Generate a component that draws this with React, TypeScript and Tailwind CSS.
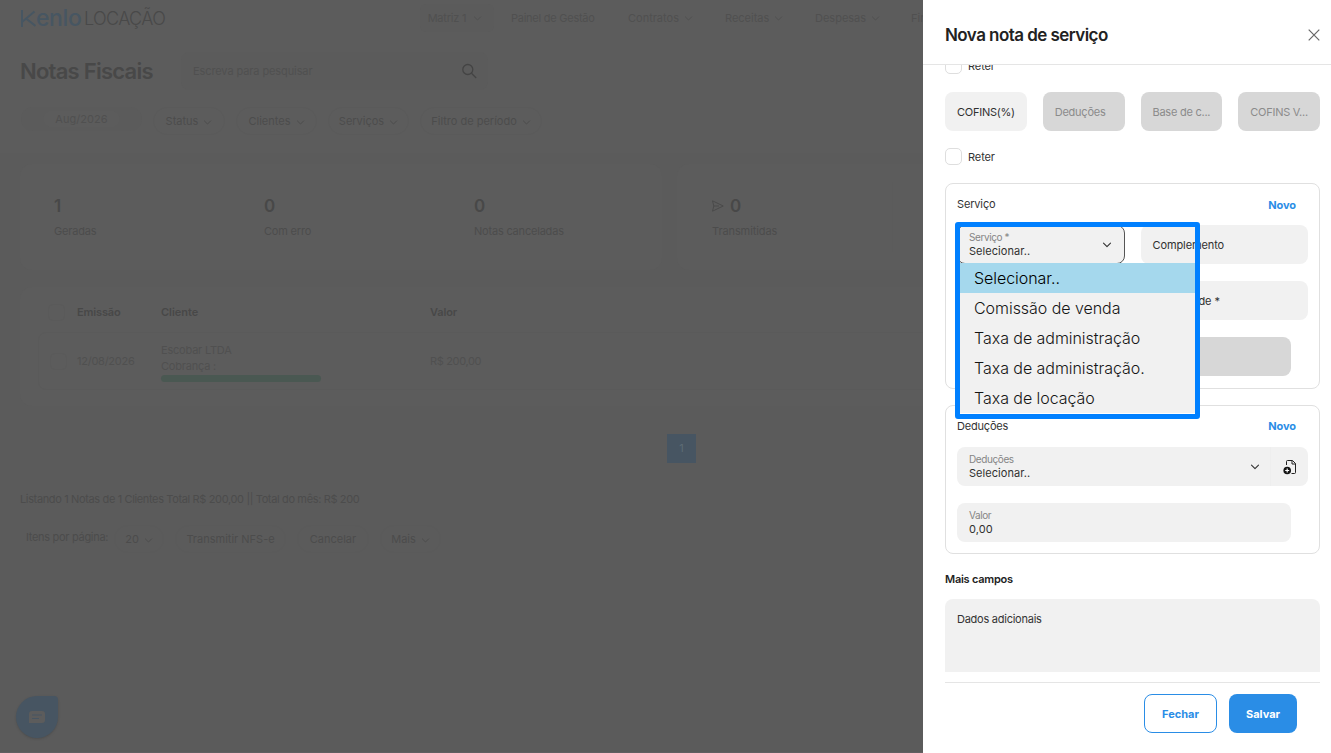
import React from 'react';
import clsx from 'clsx';

const NAV_ITEMS = [
  { label: 'Contratos', width: 'w-[97px]' },
  { label: 'Receitas', width: 'w-[90px]' },
  { label: 'Despesas', width: 'w-[96px]' },
  { label: 'Financeiro', width: 'w-[100px]' },
];

const FILTERS = [
  { label: 'Status', width: 'w-[72px]' },
  { label: 'Clientes', width: 'w-[81px]' },
  { label: 'Serviços', width: 'w-[81px]' },
  { label: 'Filtro de período', width: 'w-[122px]' },
];

const STATS = [
  { value: '1', label: 'Geradas' },
  { value: '0', label: 'Com erro' },
  { value: '0', label: 'Notas canceladas' },
];

const OPTIONS = [
  'Selecionar..',
  'Comissão de venda',
  'Taxa de administração',
  'Taxa de administração.',
  'Taxa de locação',
];

const Chevron = ({ className }: { className?: string }) => (
  <svg viewBox="0 0 10 10" fill="none" stroke="currentColor" strokeWidth={1.1} strokeLinecap="round" strokeLinejoin="round" className={clsx('shrink-0', className)}>
    <path d="M1.5 3.2L5 6.7L8.5 3.2" />
  </svg>
);

const Logo = () => (
  <div className="flex h-[22px] items-center">
    <svg viewBox="0 0 16 17" fill="none" stroke="#475662" strokeWidth={2} className="h-[17px] w-4">
      <path d="M2 0V17M2 12L14.5 1.5M6 8.5L15.5 16" />
    </svg>
    <span className="w-[48px] text-[23px] leading-none font-medium tracking-[-0.4px] text-[#475662]">enlo</span>
    <span className="pt-px text-[18px] leading-none font-light tracking-[-0.65px] text-[#494949]">LOCAÇÃO</span>
  </div>
);

const Pill = ({ label, width, chevron = true }: { label: string; width: string; chevron?: boolean }) => (
  <div className={clsx('flex h-7 shrink-0 items-center justify-center gap-[5px] rounded-full border border-[#5a5a5a] text-[11px] text-[#4c4c4c]', width)}>
    <span className="whitespace-nowrap">{label}</span>
    {chevron && <Chevron className="mt-0.5 h-[9px] w-[9px]" />}
  </div>
);

const Checkbox = ({ label }: { label: string }) => (
  <div className="flex h-[17px] items-center gap-1.5">
    <span className="h-[17px] w-[17px] rounded-[5px] border border-[#dedede] bg-white" />
    <span className="pt-0.5 text-[11px] tracking-[-0.1px] text-[#333]">{label}</span>
  </div>
);

const Field = ({ label, disabled, className }: { label?: string; disabled?: boolean; className?: string }) => (
  <div
    className={clsx(
      'flex h-[39px] items-center overflow-hidden rounded-lg px-3 pt-0.5 text-[11px] whitespace-nowrap',
      disabled ? 'bg-[#d7d7d7] text-[#8b8b8b]' : 'bg-[#f1f1f1] text-[#303030]',
      className || 'tracking-[-0.25px]',
    )}
  >
    {label}
  </div>
);

const ValueField = ({ label, value, className, children }: { label: string; value: string; className?: string; children?: React.ReactNode }) => (
  <div className={clsx('flex h-[39px] items-center bg-[#f1f1f1]', className)}>
    <div className="flex-1">
      <div className="text-[10px] leading-[11px] tracking-[-0.4px] text-[#858585]">{label}</div>
      <div className="pt-0.5 text-[11px] leading-[13px] tracking-[0.05px] text-[#303030]">{value}</div>
    </div>
    {children}
  </div>
);

const AddFileIcon = () => (
  <svg viewBox="0 0 14 16" fill="none" stroke="#222" className="h-4 w-3.5">
    <path d="M3.5 6V2.5Q3.5 1.5 4.5 1.5H9.5L12.5 4.5V13.5Q12.5 14.5 11.5 14.5H8.5M9 1.5V5H12.5" strokeWidth={1} />
    <circle cx="4.2" cy="11.5" r="3.8" fill="#151515" stroke="none" />
    <path d="M4.2 9.5V13.5M2.2 11.5H6.2" stroke="#fff" strokeWidth={1.1} />
  </svg>
);

const NotesPage = () => (
  <main className="relative h-full w-[923px] shrink-0 overflow-hidden border-b border-[#625f62] bg-[#5b5b5b] text-[11px] text-[#4c4c4c]">
    <header className="flex h-9 items-center bg-[#5c5c5c] pl-5">
      <div className="w-[400px] shrink-0">
        <Logo />
      </div>
      <div className="flex h-7 w-[74px] shrink-0 items-center justify-center gap-[7px] rounded-md bg-[#5b5b5b] pr-1 text-[#505050]">
        <span className="tracking-[-0.2px]">Matriz 1</span>
        <Chevron className="h-[9px] w-[9px]" />
      </div>
      <span className="ml-[17px] w-[117px] shrink-0 tracking-[-0.25px] text-[#505050]">Painel de Gestão</span>
      {NAV_ITEMS.map((item) => (
        <div key={item.label} className={clsx('flex shrink-0 items-center gap-[5px] text-[#505050]', item.width)}>
          {item.label}
          <Chevron className="h-[9px] w-[9px]" />
        </div>
      ))}
    </header>

    <div className="flex h-[70px] items-center bg-[#5c5c5c] pl-5">
      <h1 className="w-[161px] shrink-0 text-[22px] font-semibold tracking-[-0.75px] text-[#484848]">Notas Fiscais</h1>
      <div className="flex h-[38px] w-[307px] items-center justify-between rounded-lg bg-[#5b5b5b] pr-[11px] pl-3 text-[#505050]">
        <span className="tracking-[-0.1px]">Escreva para pesquisar</span>
        <svg viewBox="0 0 16 16" fill="none" stroke="#444" strokeWidth={1.3} className="h-4 w-4">
          <circle cx="6.8" cy="6.5" r="5" />
          <path d="M10.5 10.2L15.2 15" />
        </svg>
      </div>
    </div>

    <div className="flex h-[47px] items-start gap-[11px] bg-[#5c5c5c] pt-[1px] pl-[21px]">
      <div className="flex h-6 w-[121px] items-center justify-center rounded-full bg-[#5b5b5b]">
        <span className="rounded-full bg-[#5c5c5c] px-3 tracking-[0.05px] text-[#505050]">Aug/2026</span>
      </div>
      {FILTERS.map((filter) => (
        <Pill key={filter.label} label={filter.label} width={filter.width} />
      ))}
    </div>

    <div className="flex gap-[15px] pt-[11px] pl-5">
      <section className="flex h-[106px] w-[642px] shrink-0 rounded-xl bg-[#5c5c5c] pl-[34px]">
        {STATS.map((stat) => (
          <div key={stat.label} className="w-[210px] shrink-0 pt-[30px]">
            <div className="text-[17px] leading-6 font-semibold text-[#484848]">{stat.value}</div>
            <div className="mt-[5px] text-[11px] leading-4 tracking-[-0.2px] whitespace-nowrap">{stat.label}</div>
          </div>
        ))}
      </section>
      <section className="flex h-[106px] w-[633px] shrink-0 items-center rounded-xl bg-[#5c5c5c] pl-[35px]">
        <div className="h-[70px] w-[181px] border-r border-[#5b5b5b] pt-3">
          <div className="flex items-center gap-1.5 text-[17px] leading-6 font-semibold text-[#484848]">
            <svg viewBox="0 0 12 12" fill="none" stroke="#4a4a4a" className="h-3 w-3">
              <path d="M0.5 0.8L11.2 6L0.5 11.2L1.8 6ZM1.8 6H7" />
            </svg>
            0
          </div>
          <div className="mt-[5px] text-[11px] leading-4 tracking-[-0.1px]">Transmitidas</div>
        </div>
      </section>
    </div>

    <section className="mt-[17px] ml-5 h-[119px] w-[1290px] rounded-xl bg-[#5c5c5c] pt-[7px] pl-[18px]">
      <div className="flex h-[38px] items-center pb-px pl-2.5 font-semibold text-[#484848]">
        <span className="mr-3 h-[17px] w-[17px] rounded-[5px] border border-[#5a5a5a]" />
        <span className="w-[84px] tracking-[-0.15px]">Emissão</span>
        <span className="w-[269px]">Cliente</span>
        <span className="tracking-[-0.15px]">Valor</span>
      </div>
      <div className="flex h-[58px] items-center rounded-lg border border-[#5a5a5a] pl-[11px] text-[#505050]">
        <span className="mr-[10px] h-[17px] w-[17px] rounded-[5px] border border-[#5a5a5a]" />
        <span className="w-[84px] tracking-[-0.25px]">12/08/2026</span>
        <div className="w-[269px] pt-[1px]">
          <div className="leading-4 tracking-[-0.2px]">Escobar LTDA</div>
          <div className="leading-4 tracking-[-0.2px]">Cobrança :</div>
          <div className="mt-px h-[7px] w-40 rounded-full bg-[#4a5852]" />
        </div>
        <span className="tracking-[-0.35px]">R$ 200,00</span>
      </div>
    </section>

    <div className="flex w-[1331px] justify-center pt-7 pl-8">
      <span className="flex h-[29px] w-[29px] items-center justify-center bg-[#475562] text-[11px] text-[#5d6c75]">1</span>
    </div>

    <p className="mt-7 pl-5 leading-4 tracking-[-0.36px]">
      Listando 1 Notas de 1 Clientes Total R$ 200,00 || Total do mês: R$ 200
    </p>

    <div className="mt-[18px] flex items-center pl-[26px]">
      <span className="mb-1 w-[88px] tracking-[-0.3px] whitespace-nowrap">Itens por página:</span>
      <div className="flex gap-[11px]">
        <Pill label="20" width="w-[50px]" />
        <Pill label="Transmitir NFS-e" width="w-[111px]" chevron={false} />
        <Pill label="Cancelar" width="w-[72px]" chevron={false} />
        <Pill label="Mais" width="w-[61px]" />
      </div>
    </div>

    {/* Floating chat button */}
    <button className="absolute bottom-[14px] left-4 flex h-[42px] w-[42px] items-center justify-center rounded-[21px] rounded-tr-[4px] bg-[#475562] shadow-sm">
      <svg viewBox="0 0 16 12" className="h-3 w-4">
        <path d="M3 0H13Q16 0 16 3V9Q16 12 13 12H0V3Q0 0 3 0Z" fill="#5c5c5c" />
        <path d="M3 4H13M3 7.5H10" stroke="#475562" strokeWidth={1.2} />
      </svg>
    </button>
  </main>
);

const ServiceDropdown = () => (
  <div className="absolute -top-[3px] -left-[2px] z-10 h-[197px] w-[245px] rounded-[3px] border-5 border-[#0080ff] pt-9">
    {OPTIONS.map((option, idx) => (
      <div
        key={option}
        className={clsx(
          'flex h-[30px] items-center pl-3.5 text-[16px] font-light tracking-[-0.05px]',
          idx === 0 ? 'bg-[#a5d8ed] text-black' : 'bg-[#f1f1f1] text-[#151515]',
        )}
      >
        {option}
      </div>
    ))}
  </div>
);

const ServiceDrawer = () => (
  <aside className="flex h-full flex-1 flex-col bg-white">
    <div className="flex h-[65px] shrink-0 items-center justify-between border-b border-[#e5e5e5] pt-[5px] pr-[11px] pl-[22px]">
      <h2 className="pt-0.5 text-[17px] font-semibold tracking-[-0.55px] text-[#222]">Nova nota de serviço</h2>
      <svg viewBox="0 0 12 12" stroke="#666" strokeWidth={1.2} className="h-3 w-3">
        <path d="M0.7 0.7L11.3 11.3M11.3 0.7L0.7 11.3" />
      </svg>
    </div>

    <div className="h-[607px] shrink-0 overflow-hidden pr-[11px] pl-[22px]">
      <div className="-mt-2">
        <Checkbox label="Reter" />
      </div>
      <div className="mt-[18px] grid grid-cols-4 gap-4">
        <Field label="COFINS(%)" />
        <Field label="Deduções" disabled />
        <Field label="Base de c..." disabled />
        <Field label="COFINS V..." disabled />
      </div>
      <div className="mt-[17px]">
        <Checkbox label="Reter" />
      </div>

      <section className="mt-[18px] h-[206px] rounded-lg border border-[#e0e0e0] px-[11px]">
        <div className="flex h-[41px] items-center justify-between pr-3">
          <span className="text-[11px] tracking-[-0.15px] text-[#333]">Serviço</span>
          <span className="pt-0.5 text-[11px] font-bold tracking-[-0.05px] text-[#2a8de6]">Novo</span>
        </div>
        <div className="relative">
          <div className="grid grid-cols-2 gap-4">
            <ValueField label="Serviço *" value="Selecionar.." className="rounded-lg border border-[#555] pl-[11px]">
              <Chevron className="mr-[12px] h-2.5 w-2.5 text-[#333]" />
            </ValueField>
            <Field label="Complemento" className="tracking-[-0.1px]" />
          </div>
          <ServiceDropdown />
        </div>
        <div className="mt-[17px] grid grid-cols-2 gap-4">
          <Field />
          <Field label="Quantidade *" className="tracking-[-0.1px]" />
        </div>
        <Field disabled className="mt-[17px] mr-[17px]" />
      </section>

      <section className="mt-4 h-[149px] rounded-lg border border-[#e0e0e0] px-[11px]">
        <div className="flex h-[41px] items-center justify-between pr-3">
          <span className="text-[11px] tracking-[-0.2px] text-[#333]">Deduções</span>
          <span className="text-[11px] font-bold tracking-[-0.05px] text-[#2a8de6]">Novo</span>
        </div>
        <ValueField label="Deduções" value="Selecionar.." className="rounded-lg pl-3">
          <Chevron className="mr-[10px] h-2.5 w-2.5 text-[#333]" />
          <div className="flex h-full w-[38px] items-center justify-center border-l border-[#eee]">
            <AddFileIcon />
          </div>
        </ValueField>
        <ValueField label="Valor" value="0,00" className="mt-[17px] mr-[17px] rounded-lg pl-3" />
      </section>

      <h3 className="mt-[17px] text-[11px] leading-4 font-semibold tracking-[-0.25px] text-[#222]">Mais campos</h3>
      <div className="mt-3 h-[120px] rounded-lg bg-[#f1f1f1] px-3 pt-3 text-[11px] leading-4 tracking-[-0.25px] text-[#333]">
        Dados adicionais
      </div>
    </div>

    <div className="mt-[10px] mr-[11px] ml-[22px] flex justify-end gap-3 border-t border-[#e5e5e5] pt-[11px] pr-[23px] text-[11px] font-bold">
      <button className="h-[39px] w-[73px] rounded-lg border border-[#2a8de6] pt-0.5 text-[#2a8de6]">Fechar</button>
      <button className="h-[39px] w-[68px] rounded-lg bg-[#2a8de6] pt-0.5 text-white">Salvar</button>
    </div>
  </aside>
);

export default function App() {
  return (
    <div className="flex h-screen w-full overflow-hidden font-['Inter',sans-serif]">
      <NotesPage />
      <ServiceDrawer />
    </div>
  );
}
